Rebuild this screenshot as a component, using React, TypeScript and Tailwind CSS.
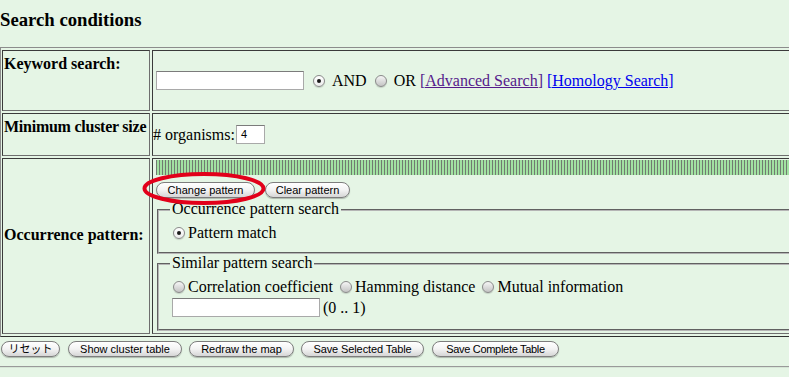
import * as React from 'react'

function Radio({ checked, className = '' }: { checked?: boolean; className?: string }) {
  return (
    <span
      className={
        'inline-flex h-[12px] w-[12px] shrink-0 items-center justify-center rounded-full border border-[#8a8a8a] shadow-[0_1px_1px_rgba(0,0,0,0.15)] ' +
        (checked ? 'bg-gradient-to-b from-white to-[#ececec] ' : 'bg-gradient-to-b from-[#f6f6f6] to-[#c4c4c4] ') +
        className
      }
    >
      {checked && <span className="h-[4px] w-[4px] rounded-full bg-[#1a1a1a]" />}
    </span>
  )
}

function MacButton({ children, className = '' }: { children: React.ReactNode; className?: string }) {
  return (
    <button
      className={
        "h-[16px] shrink-0 whitespace-nowrap rounded-full border border-[#7d7d7d] bg-gradient-to-b from-white via-[#f3f3f3] to-[#d6d6d6] px-0 text-center font-['Liberation_Sans',Arial,'Noto_Sans_CJK_JP',sans-serif] text-[11px] leading-[14px] text-black shadow-[0_1px_1px_rgba(0,0,0,0.25)] " +
        className
      }
    >
      {children}
    </button>
  )
}

function TextBox({ className = '', value = '' }: { className?: string; value?: string }) {
  return (
    <div
      className={
        "h-[19px] shrink-0 border border-[#a9a9a9] border-t-[#7b7b7b] bg-white font-['Liberation_Sans',Arial,sans-serif] text-[11px] leading-[17px] " +
        className
      }
    >
      {value}
    </div>
  )
}

function Group({ title, className = '', children }: { title: string; className?: string; children: React.ReactNode }) {
  return (
    <div className={'relative mx-[4px] shrink-0 border-2 border-[#b5b5b5] [border-style:groove] pl-[14px] pt-[13px] ' + className}>
      <span className="absolute left-[11px] top-[-11px] bg-[#e5f5e5] px-[2px] leading-[18px] whitespace-nowrap">{title}</span>
      {children}
    </div>
  )
}

const cellBorder = 'border border-t-[#3a3a3a] border-l-[#3a3a3a] border-b-[#6e6e6e] border-r-[#6e6e6e]'

export default function App() {
  return (
    <div className="relative h-[377px] w-[789px] overflow-hidden bg-[#e5f5e5] font-['Liberation_Serif','Times_New_Roman',serif] text-[16px] leading-normal text-black">
      {/* Title */}
      <div className="h-[47px] pt-[6px]">
        <h3 className="text-[18.72px] font-bold leading-normal">Search conditions</h3>
      </div>

      {/* Conditions table */}
      <div className="grid w-[960px] grid-cols-[148px_1fr] grid-rows-[61px_43px_176px] gap-[2px] border border-t-[#8c8c8c] border-l-[#8c8c8c] border-b-[#2e2e2e] border-r-[#2e2e2e] py-[2px] pl-[1px] pr-[2px]">
        {/* Keyword search */}
        <div className={cellBorder + ' p-[1px] font-bold'}>Keyword search:</div>
        <div className={cellBorder + ' flex items-center'}>
          <TextBox className="ml-[3px] w-[148px]" />
          <Radio checked className="ml-[9px]" />
          <span className="ml-[7px]">AND</span>
          <Radio className="ml-[8px]" />
          <span className="ml-[7px]">OR</span>
          <a href="#" className="ml-[4px] text-[#551a8b] underline">[Advanced Search]</a>
          <a href="#" className="ml-[4px] text-[#0000ee] underline">[Homology Search]</a>
        </div>

        {/* Minimum cluster size */}
        <div className={cellBorder + ' p-[1px] font-bold whitespace-nowrap tracking-[-0.25px]'}>Minimum cluster size</div>
        <div className={cellBorder + ' flex items-center'}>
          <span>#&nbsp;organisms:</span>
          <TextBox className="ml-[1px] w-[29px] pl-[4px]" value="4" />
        </div>

        {/* Occurrence pattern */}
        <div className={cellBorder + ' flex items-center p-[1px] pb-[24px] font-bold'}>Occurrence pattern:</div>
        <div className={cellBorder + ' flex flex-col overflow-hidden'}>
          <div className="ml-[3px] mt-[1px] h-[15px] shrink-0 bg-[repeating-linear-gradient(90deg,#717c71_0px,#717c71_1px,#a2e2a2_1px,#a2e2a2_3px)]" />
          <div className="ml-[3px] mt-[7px] flex shrink-0">
            <MacButton className="w-[99px]">Change pattern</MacButton>
            <MacButton className="ml-[10px] w-[85px]">Clear pattern</MacButton>
          </div>

          <Group title="Occurrence pattern search" className="mt-[11px] pb-[10px]">
            <div className="flex h-[18px] items-center">
              <Radio checked />
              <span className="ml-[3px]">Pattern match</span>
            </div>
          </Group>

          <Group title="Similar pattern search" className="mt-[9px] pb-[12px]">
            <div className="flex h-[18px] items-center">
              <Radio />
              <span className="ml-[3px]">Correlation coefficient</span>
              <Radio className="ml-[7px]" />
              <span className="ml-[3px]">Hamming distance</span>
              <Radio className="ml-[7px]" />
              <span className="ml-[3px]">Mutual information</span>
            </div>
            <div className="mt-[2px] flex h-[19px] items-center">
              <TextBox className="ml-[-1px] w-[148px]" />
              <span className="ml-[3px] leading-[18px]">(0 .. 1)</span>
            </div>
          </Group>
        </div>
      </div>

      {/* Bottom buttons */}
      <div className="mt-[4px] flex">
        <MacButton className="ml-[1px] w-[59px] text-[10.5px]">リセット</MacButton>
        <MacButton className="ml-[8px] w-[114px]">Show cluster table</MacButton>
        <MacButton className="ml-[7px] w-[105px]">Redraw the map</MacButton>
        <MacButton className="ml-[7px] w-[123px] tracking-[-0.1px]">Save Selected Table</MacButton>
        <MacButton className="ml-[8px] w-[127px] tracking-[-0.3px]">Save Complete Table</MacButton>
      </div>
      <div className="mt-[9px] border-t border-b border-t-[#9a9a9a] border-b-[#d6e6d6]" />

      {/* Annotation ellipse */}
      <svg className="absolute left-[142px] top-[171px]" width="124" height="35" viewBox="0 0 124 35">
        <ellipse cx="62" cy="17.5" rx="59.5" ry="14.5" fill="none" stroke="#e2001a" strokeWidth="4" />
      </svg>
    </div>
  )
}
